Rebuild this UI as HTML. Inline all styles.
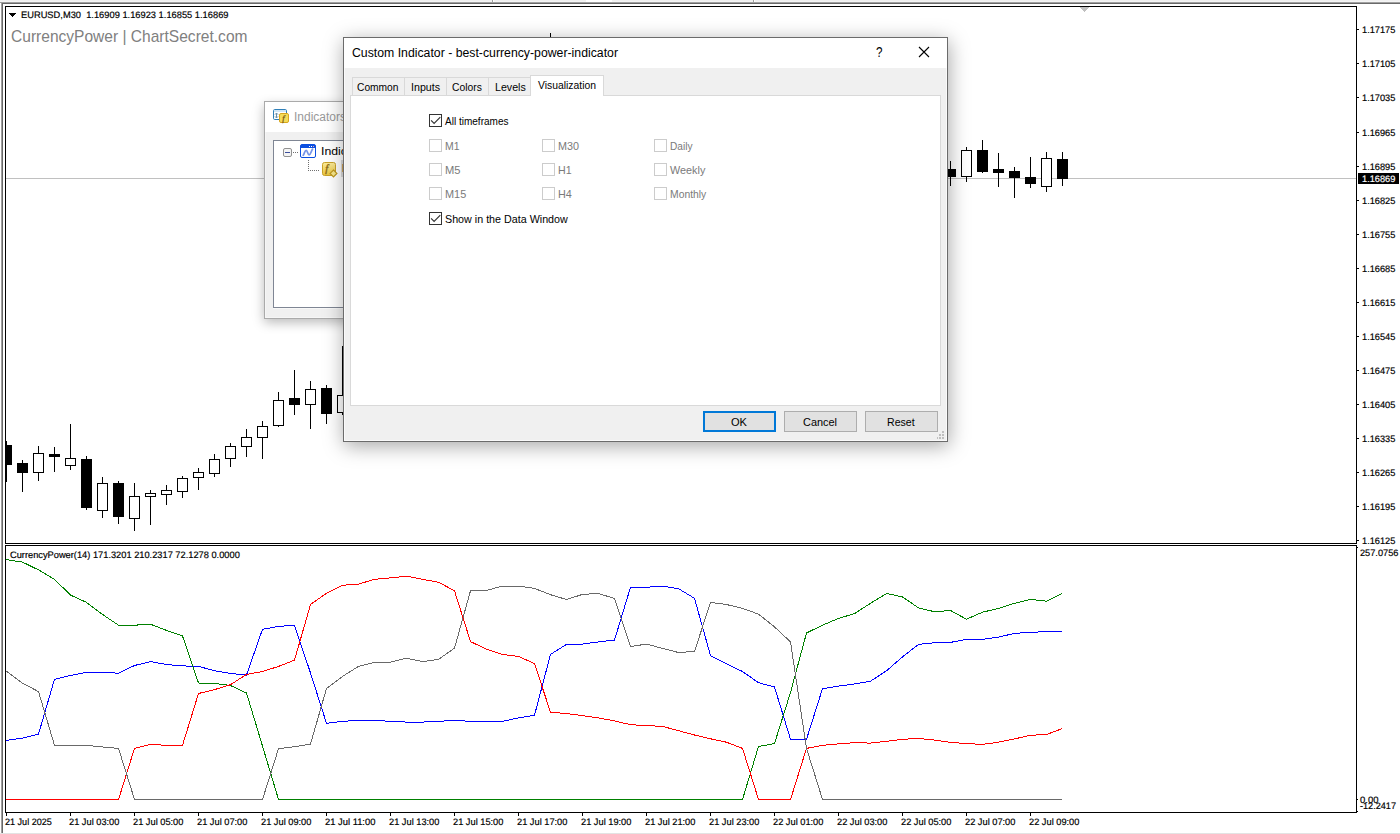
<!DOCTYPE html>
<html lang="en"><head><meta charset="utf-8"><title>EURUSD,M30 - Custom Indicator</title>
<style>
html,body{margin:0;padding:0;background:#fff;}
body{width:1400px;height:834px;position:relative;overflow:hidden;font-family:"Liberation Sans", sans-serif;}
svg{display:block}
#chart{position:absolute;left:0;top:0;}
#indwin{position:absolute;left:264px;top:101px;width:120px;height:218px;overflow:hidden;box-shadow:0 3.5px 11px rgba(0,0,0,.28);}
#dlg{position:absolute;left:343px;top:37px;width:605px;height:405px;box-shadow:1px 4px 19px rgba(0,0,0,.35);}
</style></head><body>
<svg id="chart" width="1400" height="834" viewBox="0 0 1400 834" shape-rendering="crispEdges">
<rect x="0" y="0" width="1400" height="834" fill="#fff"/>
<rect x="0" y="0" width="1400" height="2" fill="#f0f0f0"/>
<rect x="0" y="1" width="1400" height="1" fill="#f4f4f4"/>
<rect x="492" y="0" width="1" height="2" fill="#a0a0a0"/><rect x="493" y="0" width="1" height="2" fill="#fff"/>
<rect x="586" y="0" width="26" height="2" fill="#fff"/>
<rect x="753" y="0" width="1" height="2" fill="#a0a0a0"/><rect x="754" y="0" width="1" height="2" fill="#fff"/>
<rect x="0" y="2" width="1400" height="1" fill="#a0a0a0"/>
<rect x="2" y="3" width="1398" height="1" fill="#696969"/>
<rect x="1" y="3" width="1" height="830" fill="#a0a0a0"/>
<rect x="2" y="3" width="1" height="830" fill="#696969"/>
<rect x="0" y="833" width="1400" height="1" fill="#e3e3e3"/>
<g fill="#000">
<rect x="5" y="6" width="1352" height="1"/>
<rect x="5" y="543" width="1352" height="1"/>
<rect x="5" y="545" width="1352" height="1"/>
<rect x="5" y="812" width="1352" height="1"/>
<rect x="5" y="6" width="1" height="538"/><rect x="5" y="545" width="1" height="268"/>
<rect x="1356" y="6" width="1" height="538"/><rect x="1356" y="545" width="1" height="268"/>
</g>
<polygon points="1080,7 1089,7 1084.5,12" fill="#c0c0c0"/>
<rect x="6" y="178" width="1350" height="1" fill="#c0c0c0"/>
<g fill="#000">
<rect x="6" y="441" width="1" height="41"/>
<rect x="6" y="445" width="6" height="20"/>
<rect x="22" y="460" width="1" height="32"/>
<rect x="17" y="463" width="11" height="10"/>
<rect x="38" y="446" width="1" height="35"/>
<rect x="33" y="453" width="11" height="20"/><rect x="34" y="454" width="9" height="18" fill="#fff"/>
<rect x="54" y="447" width="1" height="25"/>
<rect x="49" y="454" width="11" height="3"/>
<rect x="70" y="424" width="1" height="46"/>
<rect x="65" y="458" width="11" height="8"/><rect x="66" y="459" width="9" height="6" fill="#fff"/>
<rect x="86" y="456" width="1" height="54"/>
<rect x="81" y="459" width="11" height="49"/>
<rect x="102" y="477" width="1" height="41"/>
<rect x="97" y="483" width="11" height="28"/><rect x="98" y="484" width="9" height="26" fill="#fff"/>
<rect x="118" y="481" width="1" height="43"/>
<rect x="113" y="483" width="11" height="34"/>
<rect x="134" y="483" width="1" height="48"/>
<rect x="129" y="496" width="11" height="23"/><rect x="130" y="497" width="9" height="21" fill="#fff"/>
<rect x="150" y="490" width="1" height="35"/>
<rect x="145" y="493" width="11" height="4"/><rect x="146" y="494" width="9" height="2" fill="#fff"/>
<rect x="166" y="485" width="1" height="20"/>
<rect x="161" y="490" width="11" height="5"/><rect x="162" y="491" width="9" height="3" fill="#fff"/>
<rect x="182" y="476" width="1" height="22"/>
<rect x="177" y="478" width="11" height="14"/><rect x="178" y="479" width="9" height="12" fill="#fff"/>
<rect x="198" y="468" width="1" height="22"/>
<rect x="193" y="472" width="11" height="6"/><rect x="194" y="473" width="9" height="4" fill="#fff"/>
<rect x="214" y="454" width="1" height="23"/>
<rect x="209" y="459" width="11" height="15"/><rect x="210" y="460" width="9" height="13" fill="#fff"/>
<rect x="230" y="443" width="1" height="24"/>
<rect x="225" y="446" width="11" height="13"/><rect x="226" y="447" width="9" height="11" fill="#fff"/>
<rect x="246" y="429" width="1" height="28"/>
<rect x="241" y="437" width="11" height="10"/><rect x="242" y="438" width="9" height="8" fill="#fff"/>
<rect x="262" y="421" width="1" height="38"/>
<rect x="257" y="426" width="11" height="12"/><rect x="258" y="427" width="9" height="10" fill="#fff"/>
<rect x="278" y="392" width="1" height="35"/>
<rect x="273" y="400" width="11" height="26"/><rect x="274" y="401" width="9" height="24" fill="#fff"/>
<rect x="294" y="370" width="1" height="45"/>
<rect x="289" y="398" width="11" height="7"/>
<rect x="310" y="381" width="1" height="48"/>
<rect x="305" y="389" width="11" height="16"/><rect x="306" y="390" width="9" height="14" fill="#fff"/>
<rect x="326" y="385" width="1" height="39"/>
<rect x="321" y="388" width="11" height="26"/>
<rect x="342" y="346" width="1" height="69"/>
<rect x="337" y="395" width="11" height="18"/><rect x="338" y="396" width="9" height="16" fill="#fff"/>
<rect x="550" y="33" width="1" height="28"/>
<rect x="545" y="40" width="11" height="16"/><rect x="546" y="41" width="9" height="14" fill="#fff"/>
<rect x="950" y="161" width="1" height="25"/>
<rect x="945" y="169" width="11" height="8"/>
<rect x="966" y="147" width="1" height="35"/>
<rect x="961" y="150" width="11" height="27"/><rect x="962" y="151" width="9" height="25" fill="#fff"/>
<rect x="982" y="140" width="1" height="33"/>
<rect x="977" y="150" width="11" height="22"/>
<rect x="998" y="153" width="1" height="34"/>
<rect x="993" y="169" width="11" height="4"/>
<rect x="1014" y="167" width="1" height="31"/>
<rect x="1009" y="171" width="11" height="7"/>
<rect x="1030" y="157" width="1" height="31"/>
<rect x="1025" y="177" width="11" height="7"/>
<rect x="1046" y="152" width="1" height="40"/>
<rect x="1041" y="158" width="11" height="29"/><rect x="1042" y="159" width="9" height="27" fill="#fff"/>
<rect x="1062" y="152" width="1" height="34"/>
<rect x="1057" y="159" width="11" height="20"/>
</g>
<g fill="#000">
<rect x="1357" y="29" width="2" height="1"/>
<rect x="1357" y="63" width="2" height="1"/>
<rect x="1357" y="97" width="2" height="1"/>
<rect x="1357" y="132" width="2" height="1"/>
<rect x="1357" y="166" width="2" height="1"/>
<rect x="1357" y="200" width="2" height="1"/>
<rect x="1357" y="234" width="2" height="1"/>
<rect x="1357" y="268" width="2" height="1"/>
<rect x="1357" y="302" width="2" height="1"/>
<rect x="1357" y="336" width="2" height="1"/>
<rect x="1357" y="370" width="2" height="1"/>
<rect x="1357" y="404" width="2" height="1"/>
<rect x="1357" y="438" width="2" height="1"/>
<rect x="1357" y="472" width="2" height="1"/>
<rect x="1357" y="506" width="2" height="1"/>
<rect x="1357" y="540" width="2" height="1"/>
<rect x="1357" y="547" width="1" height="1"/><rect x="1357" y="799" width="1" height="1"/><rect x="1357" y="811" width="1" height="1"/>
<rect x="6" y="813" width="1" height="3"/>
<rect x="70" y="813" width="1" height="3"/>
<rect x="134" y="813" width="1" height="3"/>
<rect x="198" y="813" width="1" height="3"/>
<rect x="262" y="813" width="1" height="3"/>
<rect x="326" y="813" width="1" height="3"/>
<rect x="390" y="813" width="1" height="3"/>
<rect x="454" y="813" width="1" height="3"/>
<rect x="518" y="813" width="1" height="3"/>
<rect x="582" y="813" width="1" height="3"/>
<rect x="646" y="813" width="1" height="3"/>
<rect x="710" y="813" width="1" height="3"/>
<rect x="774" y="813" width="1" height="3"/>
<rect x="838" y="813" width="1" height="3"/>
<rect x="902" y="813" width="1" height="3"/>
<rect x="966" y="813" width="1" height="3"/>
<rect x="1030" y="813" width="1" height="3"/>
</g>
<rect x="1358" y="173" width="41" height="11" fill="#000"/>
<path d="M9 13h7v1h-1v1h-1v1h-1v1h-1v-1h-1v-1h-1v-1h-1z" fill="#000"/>
<polyline fill="none" stroke="#0000ff" stroke-width="1" points="6.0,740.5 22.5,738.1 38.5,734.1 54.5,679.3 70.5,675.5 86.5,672.4 102.5,672.4 118.5,673.2 134.5,665.5 150.5,661.6 166.5,664.5 182.5,665.9 198.5,666.4 214.5,670.7 230.5,673.5 246.5,675.0 262.5,629.3 278.5,626.4 294.5,625.2 310.5,673.0 326.5,723.3 342.5,721.3 358.5,720.4 374.5,720.4 390.5,721.3 406.5,722.1 422.5,722.1 438.5,721.3 454.5,720.4 470.5,721.3 486.5,721.3 502.5,721.3 518.5,717.9 534.5,715.3 550.5,654.4 566.5,644.4 582.5,644.1 598.5,641.9 614.5,640.1 630.5,587.3 646.5,587.3 662.5,586.1 678.5,588.7 694.5,598.3 710.5,655.6 726.5,663.8 742.5,671.5 758.5,682.7 774.5,687.0 790.5,739.3 806.5,739.3 822.5,688.7 838.5,686.1 854.5,684.0 870.5,681.2 886.5,670.8 902.5,656.9 918.5,644.4 934.5,642.7 950.5,642.4 966.5,639.3 982.5,639.3 998.5,637.2 1014.5,633.3 1030.5,632.4 1046.5,631.6 1062.0,631.6"/>
<polyline fill="none" stroke="#008000" stroke-width="1" points="6.0,559.6 22.5,562.1 38.5,569.9 54.5,579.3 70.5,595.1 86.5,602.4 102.5,614.4 118.5,625.2 134.5,625.2 150.5,624.2 166.5,630.4 182.5,635.9 198.5,683.0 214.5,683.5 230.5,685.5 246.5,693.0 262.5,746.1 278.5,799.5 294.5,799.5 310.5,799.5 326.5,799.5 342.5,799.5 358.5,799.5 374.5,799.5 390.5,799.5 406.5,799.5 422.5,799.5 438.5,799.5 454.5,799.5 470.5,799.5 486.5,799.5 502.5,799.5 518.5,799.5 534.5,799.5 550.5,799.5 566.5,799.5 582.5,799.5 598.5,799.5 614.5,799.5 630.5,799.5 646.5,799.5 662.5,799.5 678.5,799.5 694.5,799.5 710.5,799.5 726.5,799.5 742.5,799.5 758.5,746.5 774.5,743.6 790.5,692.5 806.5,633.0 822.5,625.2 838.5,618.4 854.5,613.6 870.5,603.3 886.5,593.5 902.5,596.9 918.5,607.9 934.5,611.7 950.5,610.5 966.5,619.2 982.5,612.2 998.5,608.4 1014.5,603.3 1030.5,599.3 1046.5,601.2 1062.0,593.5"/>
<polyline fill="none" stroke="#ff0000" stroke-width="1" points="6.0,799.5 22.5,799.5 38.5,799.5 54.5,799.5 70.5,799.5 86.5,799.5 102.5,799.5 118.5,799.5 134.5,748.4 150.5,744.4 166.5,745.3 182.5,745.3 198.5,693.5 214.5,689.6 230.5,684.7 246.5,674.4 262.5,671.5 278.5,666.4 294.5,660.2 310.5,604.5 326.5,593.3 342.5,585.3 358.5,584.1 374.5,579.3 390.5,577.9 406.5,576.2 422.5,579.3 438.5,582.2 454.5,590.8 470.5,641.6 486.5,649.2 502.5,654.4 518.5,656.4 534.5,663.6 550.5,712.2 566.5,713.6 582.5,715.6 598.5,717.9 614.5,720.9 630.5,724.7 646.5,725.6 662.5,726.4 678.5,730.7 694.5,735.0 710.5,738.8 726.5,742.2 742.5,748.4 758.5,799.5 774.5,799.5 790.5,799.5 806.5,748.4 822.5,745.3 838.5,743.9 854.5,742.7 870.5,743.1 886.5,741.3 902.5,739.3 918.5,738.4 934.5,740.1 950.5,742.4 966.5,743.6 982.5,744.4 998.5,742.2 1014.5,738.9 1030.5,735.3 1046.5,734.5 1062.0,728.7"/>
<polyline fill="none" stroke="#696969" stroke-width="1" points="6.0,671.0 22.5,683.2 38.5,691.6 54.5,745.3 70.5,745.3 86.5,745.3 102.5,747.0 118.5,748.4 134.5,799.5 150.5,799.5 166.5,799.5 182.5,799.5 198.5,799.5 214.5,799.5 230.5,799.5 246.5,799.5 262.5,799.5 278.5,748.7 294.5,746.7 310.5,744.1 326.5,688.4 342.5,676.4 358.5,666.4 374.5,662.4 390.5,662.1 406.5,658.2 422.5,661.6 438.5,659.4 454.5,648.2 470.5,590.8 486.5,590.4 502.5,586.1 518.5,586.1 534.5,588.4 550.5,594.7 566.5,599.5 582.5,594.4 598.5,593.5 614.5,598.5 630.5,646.5 646.5,644.1 662.5,648.4 678.5,652.5 694.5,651.5 710.5,602.4 726.5,604.5 742.5,608.4 758.5,614.1 774.5,626.9 790.5,641.9 806.5,748.4 822.5,799.5 838.5,799.5 854.5,799.5 870.5,799.5 886.5,799.5 902.5,799.5 918.5,799.5 934.5,799.5 950.5,799.5 966.5,799.5 982.5,799.5 998.5,799.5 1014.5,799.5 1030.5,799.5 1046.5,799.5 1062.0,799.5"/>
<g shape-rendering="auto" text-rendering="geometricPrecision" font-family='"Liberation Sans", sans-serif' font-size="9.33px" fill="#000" stroke="#000" stroke-width="0.18">
<text x="1362" y="33" textLength="33.4" lengthAdjust="spacingAndGlyphs">1.17175</text>
<text x="1362" y="67" textLength="33.4" lengthAdjust="spacingAndGlyphs">1.17105</text>
<text x="1362" y="101" textLength="33.4" lengthAdjust="spacingAndGlyphs">1.17035</text>
<text x="1362" y="136" textLength="33.4" lengthAdjust="spacingAndGlyphs">1.16965</text>
<text x="1362" y="170" textLength="33.4" lengthAdjust="spacingAndGlyphs">1.16895</text>
<text x="1362" y="204" textLength="33.4" lengthAdjust="spacingAndGlyphs">1.16825</text>
<text x="1362" y="238" textLength="33.4" lengthAdjust="spacingAndGlyphs">1.16755</text>
<text x="1362" y="272" textLength="33.4" lengthAdjust="spacingAndGlyphs">1.16685</text>
<text x="1362" y="306" textLength="33.4" lengthAdjust="spacingAndGlyphs">1.16615</text>
<text x="1362" y="340" textLength="33.4" lengthAdjust="spacingAndGlyphs">1.16545</text>
<text x="1362" y="374" textLength="33.4" lengthAdjust="spacingAndGlyphs">1.16475</text>
<text x="1362" y="408" textLength="33.4" lengthAdjust="spacingAndGlyphs">1.16405</text>
<text x="1362" y="442" textLength="33.4" lengthAdjust="spacingAndGlyphs">1.16335</text>
<text x="1362" y="476" textLength="33.4" lengthAdjust="spacingAndGlyphs">1.16265</text>
<text x="1362" y="510" textLength="33.4" lengthAdjust="spacingAndGlyphs">1.16195</text>
<text x="1362" y="544" textLength="33.4" lengthAdjust="spacingAndGlyphs">1.16125</text>
<text x="1362" y="182" fill="#fff" stroke="#fff" textLength="33.4" lengthAdjust="spacingAndGlyphs">1.16869</text>
<text x="1360" y="556" textLength="38.4" lengthAdjust="spacingAndGlyphs">257.0756</text>
<text x="1360" y="803" textLength="18.4" lengthAdjust="spacingAndGlyphs">0.00</text>
<text x="1360" y="809" textLength="36" lengthAdjust="spacingAndGlyphs">-12.2417</text>
<text x="21" y="18" textLength="207.5" lengthAdjust="spacingAndGlyphs" xml:space="preserve">EURUSD,M30  1.16909 1.16923 1.16855 1.16869</text>
<text x="10" y="558" textLength="229.8" lengthAdjust="spacingAndGlyphs">CurrencyPower(14) 171.3201 210.2317 72.1278 0.0000</text>
<text x="5" y="825" textLength="46.8" lengthAdjust="spacingAndGlyphs">21 Jul 2025</text>
<text x="69" y="825" textLength="50.4" lengthAdjust="spacingAndGlyphs">21 Jul 03:00</text>
<text x="133" y="825" textLength="50.4" lengthAdjust="spacingAndGlyphs">21 Jul 05:00</text>
<text x="197" y="825" textLength="50.4" lengthAdjust="spacingAndGlyphs">21 Jul 07:00</text>
<text x="261" y="825" textLength="50.4" lengthAdjust="spacingAndGlyphs">21 Jul 09:00</text>
<text x="325" y="825" textLength="50.4" lengthAdjust="spacingAndGlyphs">21 Jul 11:00</text>
<text x="389" y="825" textLength="50.4" lengthAdjust="spacingAndGlyphs">21 Jul 13:00</text>
<text x="453" y="825" textLength="50.4" lengthAdjust="spacingAndGlyphs">21 Jul 15:00</text>
<text x="517" y="825" textLength="50.4" lengthAdjust="spacingAndGlyphs">21 Jul 17:00</text>
<text x="581" y="825" textLength="50.4" lengthAdjust="spacingAndGlyphs">21 Jul 19:00</text>
<text x="645" y="825" textLength="50.4" lengthAdjust="spacingAndGlyphs">21 Jul 21:00</text>
<text x="709" y="825" textLength="50.4" lengthAdjust="spacingAndGlyphs">21 Jul 23:00</text>
<text x="773" y="825" textLength="50.4" lengthAdjust="spacingAndGlyphs">22 Jul 01:00</text>
<text x="837" y="825" textLength="50.4" lengthAdjust="spacingAndGlyphs">22 Jul 03:00</text>
<text x="901" y="825" textLength="50.4" lengthAdjust="spacingAndGlyphs">22 Jul 05:00</text>
<text x="965" y="825" textLength="50.4" lengthAdjust="spacingAndGlyphs">22 Jul 07:00</text>
<text x="1029" y="825" textLength="50.4" lengthAdjust="spacingAndGlyphs">22 Jul 09:00</text>
</g>
<text x="11" y="42" shape-rendering="auto" font-family='"Liberation Sans", sans-serif' font-size="16.4px" fill="#808080" textLength="236.5" lengthAdjust="spacingAndGlyphs">CurrencyPower | ChartSecret.com</text>
</svg>
<div id="indwin"><svg width="120" height="218" viewBox="264 101 120 218" shape-rendering="crispEdges">
<rect x="264.5" y="101.5" width="400" height="217" fill="#f0f0f0" stroke="#aaaaaa"/>
<rect x="265" y="132" width="1" height="186" fill="#f6f6f6"/><rect x="265" y="317" width="400" height="1" fill="#f6f6f6"/>
<rect x="265" y="102" width="400" height="30" fill="#fff"/>
<rect x="273" y="308" width="400" height="1" fill="#f8f8f8"/>
<g shape-rendering="auto">
<rect x="273.5" y="109.5" width="13" height="10" rx="1.2" fill="#fff" stroke="#2f7fb8"/>
<rect x="274" y="110" width="12" height="2" fill="#cfe6f7"/>
<path d="M276.5 113.2v4.6M275 114.6l1.5-1.6 1.5 1.6M275 116.4l1.5 1.6 1.5-1.6" fill="none" stroke="#6b8fa8" stroke-width="1"/>
<rect x="279.5" y="113.5" width="9" height="9" rx="1.5" fill="#f4dc5a" stroke="#d8a61c"/>
<text x="282.3" y="120.6" font-family='"Liberation Serif", serif' font-style="italic" font-size="8.5px" fill="#7a5a14" stroke="#7a5a14" stroke-width="0.3">f</text>
</g>
<text x="294" y="121" shape-rendering="auto" font-family='"Liberation Sans", sans-serif' font-size="12px" fill="#999" textLength="52" lengthAdjust="spacingAndGlyphs">Indicators</text>
<rect x="273.5" y="140.5" width="400" height="167" fill="#fff" stroke="#7f8694"/>
<rect x="283.5" y="148.5" width="8" height="8" rx="1.5" fill="#f4f4f4" stroke="#919191" shape-rendering="auto"/>
<rect x="285" y="152" width="5" height="1" fill="#3c4f9c"/>
<g fill="#707070">
<rect x="293" y="152" width="1" height="1"/>
<rect x="295" y="152" width="1" height="1"/>
<rect x="297" y="152" width="1" height="1"/>
<rect x="308" y="160" width="1" height="1"/>
<rect x="308" y="162" width="1" height="1"/>
<rect x="308" y="164" width="1" height="1"/>
<rect x="308" y="166" width="1" height="1"/>
<rect x="308" y="168" width="1" height="1"/>
<rect x="308" y="170" width="1" height="1"/>
<rect x="310" y="170" width="1" height="1"/>
<rect x="312" y="170" width="1" height="1"/>
<rect x="314" y="170" width="1" height="1"/>
<rect x="316" y="170" width="1" height="1"/>
<rect x="318" y="170" width="1" height="1"/>
</g>
<g shape-rendering="auto">
<rect x="300.5" y="144.5" width="15" height="13" rx="1.5" fill="#fff" stroke="#0b4fe0"/>
<path d="M300.5 146a1.5 1.5 0 0 1 1.5-1.5h12a1.5 1.5 0 0 1 1.5 1.5v2h-15z" fill="#0b4fe0"/>
<rect x="309" y="146" width="1" height="1" fill="#fff"/><rect x="311" y="146" width="1" height="1" fill="#fff"/><rect x="313" y="146" width="1" height="1" fill="#ff9a9a"/>
<path d="M303.2 155.3c1.2-1.5 1.6-5 3-5s1.4 4.6 2.9 4.6 2.2-4.4 3.5-5.8" fill="none" stroke="#7694e8" stroke-width="1.7" stroke-linecap="round"/>
</g>
<text x="321" y="155" shape-rendering="auto" font-family='"Liberation Sans", sans-serif' font-size="11.5px" fill="#000" textLength="47" lengthAdjust="spacingAndGlyphs">Indicator</text>
<g shape-rendering="auto">
<defs><linearGradient id="yg" x1="0" y1="0" x2="0" y2="1"><stop offset="0" stop-color="#fbeb9a"/><stop offset="1" stop-color="#e7c33e"/></linearGradient></defs>
<rect x="322.5" y="162.5" width="13" height="13" rx="2" fill="url(#yg)" stroke="#c9a227"/>
<text x="325.3" y="172.2" font-family='"Liberation Serif", serif' font-style="italic" font-size="10.5px" fill="#8a6a14" stroke="#8a6a14" stroke-width="0.4">f</text>
<path d="M333.5 170l3.4 3.4-3.4 3.4-3.4-3.4z" fill="#f8e88c" stroke="#bf9820" stroke-width="1.2"/>
</g>
<rect x="341" y="160" width="80" height="17" fill="#dcdcdc"/>
<text x="342" y="172" shape-rendering="auto" font-family='"Liberation Sans", sans-serif' font-size="11.5px" fill="#000">best-currency-power-indicator</text>
</svg></div>
<div id="dlg"><svg width="605" height="405" viewBox="343 37 605 405" shape-rendering="crispEdges">
<rect x="343" y="37" width="605" height="405" fill="#6b6b6b"/>
<rect x="344" y="38" width="603" height="403" fill="#fafafa"/>
<rect x="345" y="38" width="601" height="402" fill="#f0f0f0"/>
<rect x="344" y="38" width="603" height="30" fill="#fff"/>
<text x="352" y="57" shape-rendering="auto" font-family='"Liberation Sans", sans-serif' font-size="12px" fill="#000" textLength="266" lengthAdjust="spacingAndGlyphs">Custom Indicator - best-currency-power-indicator</text>
<text x="876" y="57" shape-rendering="auto" font-family='"Liberation Sans", sans-serif' font-size="14px" fill="#000" textLength="6.5" lengthAdjust="spacingAndGlyphs">?</text>
<path d="M919 47l10 10M929 47l-10 10" stroke="#000" stroke-width="1.1" fill="none" shape-rendering="auto"/>
<rect x="350.5" y="95.5" width="590" height="310" fill="#fff" stroke="#d9d9d9"/>
<rect x="352.5" y="77.5" width="52" height="18" fill="#f0f0f0" stroke="#d9d9d9"/>
<text x="357" y="91" shape-rendering="auto" font-family='"Liberation Sans", sans-serif' font-size="11.5px" fill="#000" textLength="41.5" lengthAdjust="spacingAndGlyphs">Common</text>
<rect x="404.5" y="77.5" width="42" height="18" fill="#f0f0f0" stroke="#d9d9d9"/>
<text x="411" y="91" shape-rendering="auto" font-family='"Liberation Sans", sans-serif' font-size="11.5px" fill="#000" textLength="29.0" lengthAdjust="spacingAndGlyphs">Inputs</text>
<rect x="446.5" y="77.5" width="42" height="18" fill="#f0f0f0" stroke="#d9d9d9"/>
<text x="452" y="91" shape-rendering="auto" font-family='"Liberation Sans", sans-serif' font-size="11.5px" fill="#000" textLength="29.8" lengthAdjust="spacingAndGlyphs">Colors</text>
<rect x="488.5" y="77.5" width="42" height="18" fill="#f0f0f0" stroke="#d9d9d9"/>
<text x="495" y="91" shape-rendering="auto" font-family='"Liberation Sans", sans-serif' font-size="11.5px" fill="#000" textLength="30.8" lengthAdjust="spacingAndGlyphs">Levels</text>
<rect x="531" y="76" width="72" height="21" fill="#fff"/>
<path d="M530.5 96V75.5H603.5V96" fill="none" stroke="#d9d9d9"/>
<text x="538" y="89" shape-rendering="auto" font-family='"Liberation Sans", sans-serif' font-size="11.5px" fill="#000" textLength="58" lengthAdjust="spacingAndGlyphs">Visualization</text>
<rect x="429.5" y="114.5" width="12" height="12" fill="#fff" stroke="#333333"/>
<path d="M431.1 120.4l3 3.1 6.2-6.3" fill="none" stroke="#333" stroke-width="1.15" shape-rendering="auto"/>
<text x="445" y="125" shape-rendering="auto" font-family='"Liberation Sans", sans-serif' font-size="11.5px" fill="#000" textLength="63.5" lengthAdjust="spacingAndGlyphs">All timeframes</text>
<rect x="429.5" y="139.5" width="12" height="12" fill="#fff" stroke="#cccccc"/>
<text x="445" y="150" shape-rendering="auto" font-family='"Liberation Sans", sans-serif' font-size="11.5px" fill="#7a7a7a" textLength="14.5" lengthAdjust="spacingAndGlyphs">M1</text>
<rect x="429.5" y="163.5" width="12" height="12" fill="#fff" stroke="#cccccc"/>
<text x="445" y="174" shape-rendering="auto" font-family='"Liberation Sans", sans-serif' font-size="11.5px" fill="#7a7a7a" textLength="15.5" lengthAdjust="spacingAndGlyphs">M5</text>
<rect x="429.5" y="187.5" width="12" height="12" fill="#fff" stroke="#cccccc"/>
<text x="445" y="198" shape-rendering="auto" font-family='"Liberation Sans", sans-serif' font-size="11.5px" fill="#7a7a7a" textLength="21.2" lengthAdjust="spacingAndGlyphs">M15</text>
<rect x="542.5" y="139.5" width="12" height="12" fill="#fff" stroke="#cccccc"/>
<text x="558" y="150" shape-rendering="auto" font-family='"Liberation Sans", sans-serif' font-size="11.5px" fill="#7a7a7a" textLength="21.0" lengthAdjust="spacingAndGlyphs">M30</text>
<rect x="542.5" y="163.5" width="12" height="12" fill="#fff" stroke="#cccccc"/>
<text x="558" y="174" shape-rendering="auto" font-family='"Liberation Sans", sans-serif' font-size="11.5px" fill="#7a7a7a" textLength="13.6" lengthAdjust="spacingAndGlyphs">H1</text>
<rect x="542.5" y="187.5" width="12" height="12" fill="#fff" stroke="#cccccc"/>
<text x="558" y="198" shape-rendering="auto" font-family='"Liberation Sans", sans-serif' font-size="11.5px" fill="#7a7a7a" textLength="13.8" lengthAdjust="spacingAndGlyphs">H4</text>
<rect x="654.5" y="139.5" width="12" height="12" fill="#fff" stroke="#cccccc"/>
<text x="670" y="150" shape-rendering="auto" font-family='"Liberation Sans", sans-serif' font-size="11.5px" fill="#7a7a7a" textLength="22.5" lengthAdjust="spacingAndGlyphs">Daily</text>
<rect x="654.5" y="163.5" width="12" height="12" fill="#fff" stroke="#cccccc"/>
<text x="670" y="174" shape-rendering="auto" font-family='"Liberation Sans", sans-serif' font-size="11.5px" fill="#7a7a7a" textLength="35.3" lengthAdjust="spacingAndGlyphs">Weekly</text>
<rect x="654.5" y="187.5" width="12" height="12" fill="#fff" stroke="#cccccc"/>
<text x="670" y="198" shape-rendering="auto" font-family='"Liberation Sans", sans-serif' font-size="11.5px" fill="#7a7a7a" textLength="36.3" lengthAdjust="spacingAndGlyphs">Monthly</text>
<rect x="429.5" y="212.5" width="12" height="12" fill="#fff" stroke="#333333"/>
<path d="M431.1 218.4l3 3.1 6.2-6.3" fill="none" stroke="#333" stroke-width="1.15" shape-rendering="auto"/>
<text x="445" y="223" shape-rendering="auto" font-family='"Liberation Sans", sans-serif' font-size="11.5px" fill="#000" textLength="122.8" lengthAdjust="spacingAndGlyphs">Show in the Data Window</text>
<rect x="703" y="411" width="73" height="21" fill="#0078d7"/><rect x="705" y="413" width="69" height="17" fill="#e1e1e1"/>
<rect x="784.5" y="411.5" width="72" height="20" fill="#e1e1e1" stroke="#adadad"/>
<rect x="865.5" y="411.5" width="72" height="20" fill="#e1e1e1" stroke="#adadad"/>
<text x="731" y="426" shape-rendering="auto" font-family='"Liberation Sans", sans-serif' font-size="11.5px" fill="#000" textLength="16.0" lengthAdjust="spacingAndGlyphs">OK</text>
<text x="803" y="426" shape-rendering="auto" font-family='"Liberation Sans", sans-serif' font-size="11.5px" fill="#000" textLength="34.0" lengthAdjust="spacingAndGlyphs">Cancel</text>
<text x="887" y="426" shape-rendering="auto" font-family='"Liberation Sans", sans-serif' font-size="11.5px" fill="#000" textLength="27.6" lengthAdjust="spacingAndGlyphs">Reset</text>
<g fill="#bfbfbf">
<rect x="942" y="431" width="2" height="2"/>
<rect x="939" y="434" width="2" height="2"/>
<rect x="942" y="434" width="2" height="2"/>
<rect x="939" y="437" width="2" height="2"/>
<rect x="942" y="437" width="2" height="2"/>
<rect x="937" y="437" width="1" height="2"/>
</g>
</svg></div>
</body></html>
